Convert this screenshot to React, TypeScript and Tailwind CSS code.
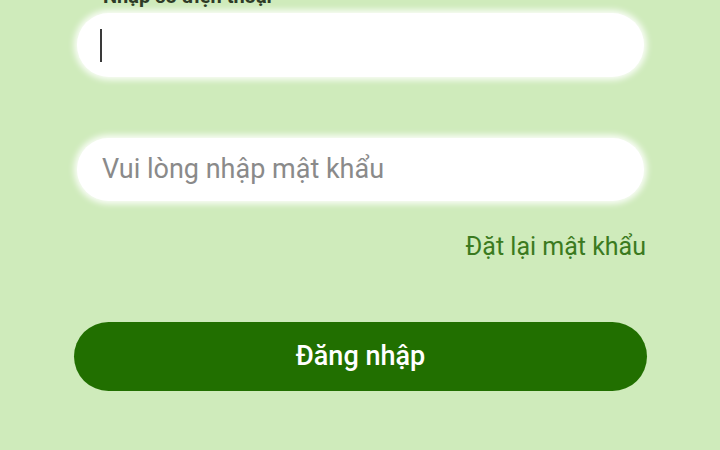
import React from 'react';

const font = { fontFamily: 'Roboto, "Noto Sans", sans-serif' };

const App = () => {
  return (
    <div
      className="w-[720px] h-[450px] overflow-hidden bg-[#cfebbb] pl-[77px] pr-[76px]"
      style={font}
    >
      {/* Phone label (cut off at top) */}
      <div className="-mt-[15px] h-[22px] pl-[26px] text-[20px] leading-[22px] font-bold text-[#2e3b27]">
        Nhập số điện thoại
      </div>

      {/* Phone field with caret */}
      <div className="mt-[6px] h-[64px] rounded-full bg-white shadow-[0_0_6px_3px_rgba(255,255,255,0.9)] flex items-center pl-[23px]">
        <span className="w-[2px] h-[33px] bg-[#3a3a3a]" />
      </div>

      {/* Password field */}
      <div className="mt-[61px] h-[63px] rounded-full bg-white shadow-[0_0_6px_3px_rgba(255,255,255,0.9)] flex items-center pl-[25px]">
        <input
          type="password"
          placeholder="Vui lòng nhập mật khẩu"
          className="w-full bg-transparent outline-none text-[27px] text-[#333] placeholder:text-[#8a8a8a]"
          style={font}
        />
      </div>

      {/* Reset link */}
      <div className="mt-[31px] -mr-[2px] flex justify-end">
        <a className="text-[25px] leading-[30px] text-[#3b7a20]">Đặt lại mật khẩu</a>
      </div>

      {/* Login button */}
      <button
        className="mt-[60px] -mx-[3px] w-[573px] h-[69px] rounded-full bg-[#216f00] text-white text-[27px] font-medium flex items-center justify-center"
        style={font}
      >
        Đăng nhập
      </button>
    </div>
  );
};

export default App;
